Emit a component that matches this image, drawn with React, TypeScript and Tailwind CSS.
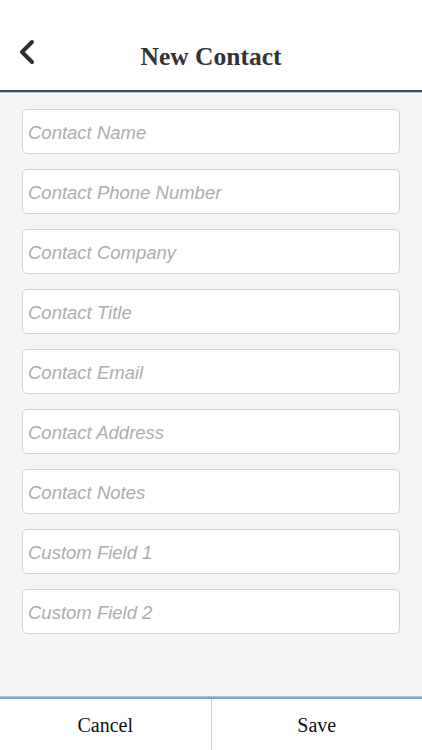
import React from 'react';

const fields = [
    'Contact Name',
    'Contact Phone Number',
    'Contact Company',
    'Contact Title',
    'Contact Email',
    'Contact Address',
    'Contact Notes',
    'Custom Field 1',
    'Custom Field 2',
];

export default function App() {
    return (
        <div className="w-[422px] h-[750px] flex flex-col bg-[#f4f4f4] overflow-hidden">
            {/* Header */}
            <div className="relative h-[90px] shrink-0 bg-white flex items-end justify-center pb-[21px]">
                <button className="absolute left-[14px] top-[35px] p-1 text-[#333]">
                    <svg width="18" height="26" viewBox="0 0 18 26" fill="none">
                        <path d="M14 3 L4 13 L14 23" stroke="#2e2e2e" strokeWidth="4" strokeLinecap="round" strokeLinejoin="round" />
                    </svg>
                </button>
                <h1 className="text-[25.5px] leading-none font-bold text-[#333] font-['Liberation_Serif',serif]">
                    New Contact
                </h1>
            </div>
            <div className="h-[2px] shrink-0 bg-[#4a4f57]" />
            <div className="h-[1px] shrink-0 bg-[#a9c4e0]" />

            {/* Fields */}
            <div className="flex-1 flex flex-col gap-[15px] pt-[16px] px-[22px]">
                {fields.map(f => (
                    <input
                        key={f}
                        placeholder={f}
                        className="h-[45px] w-full bg-white border border-[#d3d3d3] rounded-[5px] px-[5px] pt-[2px] text-[18.5px] italic text-[#333] placeholder-[#adadad] outline-none font-['Liberation_Sans',sans-serif]"
                    />
                ))}
            </div>

            {/* Footer */}
            <div className="h-[1px] shrink-0 bg-[#a9c4e0]" />
            <div className="h-[2px] shrink-0 bg-[#7da3cb]" />
            <div className="h-[51px] shrink-0 bg-white flex font-['Liberation_Serif',serif] text-[20px] text-[#111]">
                <button className="flex-1 flex items-center justify-center border-r border-[#d0d0d0]">Cancel</button>
                <button className="flex-1 flex items-center justify-center">Save</button>
            </div>
        </div>
    );
}
